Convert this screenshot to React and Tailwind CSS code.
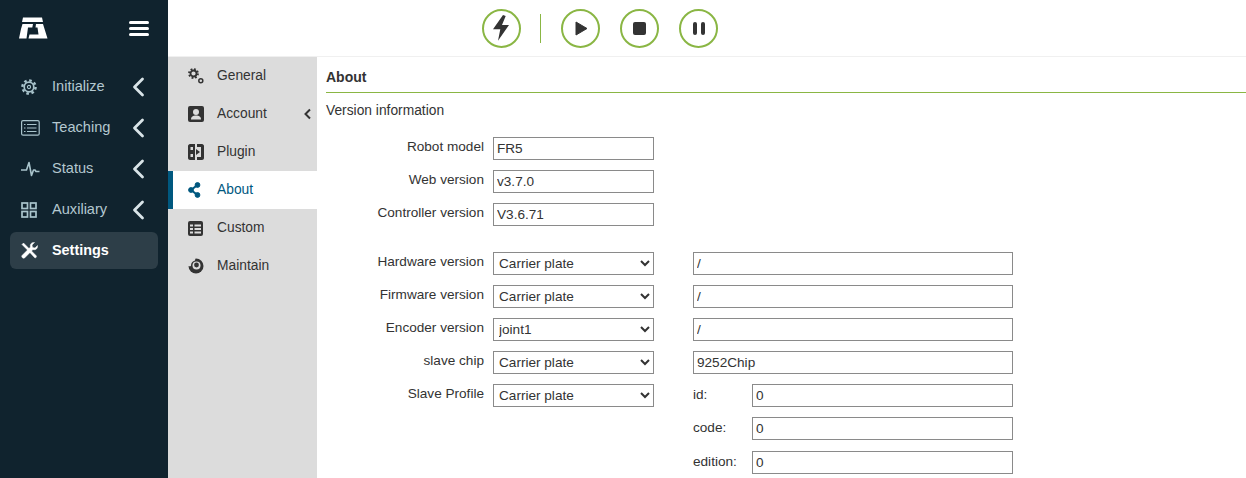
import React from "react"

const font = "font-['Liberation_Sans',Arial,sans-serif]"

function Logo() {
  return (
    <svg width="29" height="22" viewBox="0 0 29 22" fill="#fff">
      <path d="M4 0.5H23L24 5H3Z" />
      <path d="M3.5 7H14L13.3 10.5H9L7.5 21.5H0L2 12Z" />
      <path d="M17 7H24L28.5 21.5H9.5L10.5 17.5H19.5L18.5 10.5H16.5Z" />
    </svg>
  )
}

function SideChevron() {
  return (
    <svg width="13" height="20" viewBox="0 0 13 20" fill="none" stroke="#d9e4e8" strokeWidth="2.8" strokeLinecap="round" strokeLinejoin="round">
      <path d="M10.5 2L2.5 10L10.5 18" />
    </svg>
  )
}

function GearIcon() {
  return (
    <svg width="16" height="16" viewBox="0 0 16 16" fill="none" stroke="#a9c4cc">
      <circle cx="8" cy="8" r="6.6" strokeWidth="2.4" strokeDasharray="2.6 2.58" />
      <circle cx="8" cy="8" r="4.8" strokeWidth="1.7" />
      <circle cx="8" cy="8" r="1.6" strokeWidth="1.1" />
    </svg>
  )
}

function TeachingIcon() {
  return (
    <svg width="19" height="16" viewBox="0 0 19 16" fill="none" stroke="#a9c4cc" strokeWidth="1.2">
      <rect x="0.6" y="0.6" width="17.6" height="14.6" rx="1.5" />
      <path d="M3 4.5H4.5M6 4.5H15.5M3 8H4.5M6 8H15.5M3 11.5H4.5M6 11.5H15.5" />
    </svg>
  )
}

function PulseIcon() {
  return (
    <svg width="19" height="16" viewBox="0 0 19 16" fill="none" stroke="#a9c4cc" strokeWidth="1.6" strokeLinejoin="round">
      <path d="M0 9H5.5L8 1.5L10.5 14.5L12.5 9H14L15 10.5H18.5" />
    </svg>
  )
}

function GridIcon() {
  return (
    <svg width="16" height="16" viewBox="0 0 16 16" fill="none" stroke="#a9c4cc" strokeWidth="1.7">
      <rect x="1" y="1" width="5.5" height="5.5" />
      <rect x="9.5" y="1" width="5.5" height="5.5" />
      <rect x="1" y="9.5" width="5.5" height="5.5" />
      <rect x="9.5" y="9.5" width="5.5" height="5.5" />
    </svg>
  )
}

function WrenchIcon() {
  return (
    <svg width="17" height="17" viewBox="0 0 17 17" fill="#fff" stroke="#fff" strokeWidth="0.5">
      <path d="M1 2.5L2.5 1L9 7.5L15 13.5C16 14.5 15 16.5 13.5 15.5L7.5 9Z" />
      <path d="M16.5 3.5L14 6L11.5 5.5L11 3L13.5 0.5C11 0 8.5 2 9.5 5L1 13.5C0 15 2 17 3.5 16L12 7.5C15 8.5 17 6 16.5 3.5Z" />
    </svg>
  )
}

function SubIcon({ name }) {
  const dark = "#333"
  if (name === "General") {
    return (
      <svg width="16" height="16" viewBox="0 0 16 16" fill="none" stroke={dark}>
        <circle cx="5.5" cy="5.5" r="4.4" strokeWidth="2" strokeDasharray="1.8 1.65" />
        <circle cx="5.5" cy="5.5" r="3" strokeWidth="1.8" />
        <circle cx="12.8" cy="12.8" r="2" strokeWidth="1.5" />
      </svg>
    )
  }
  if (name === "Account") {
    return (
      <svg width="16" height="16" viewBox="0 0 16 16">
        <rect width="16" height="16" rx="2" fill={dark} />
        <circle cx="8" cy="6" r="3" fill="#dcdcdc" />
        <path d="M3 13.5C3 10.5 5 9.5 8 9.5S13 10.5 13 13.5Z" fill="#dcdcdc" />
      </svg>
    )
  }
  if (name === "Plugin") {
    return (
      <svg width="16" height="16" viewBox="0 0 16 16" fill={dark}>
        <path d="M0 2C0 1 1 0 2 0H7V16H2C1 16 0 15 0 14ZM2.5 3V6H5V3ZM2.5 10V13H5V10Z" fillRule="evenodd" />
        <path d="M9 0H14C15 0 16 1 16 2V14C16 15 15 16 14 16H9V13H13V3H9Z" />
        <path d="M8 5L12 8L8 11Z" />
      </svg>
    )
  }
  if (name === "About") {
    return (
      <svg width="13" height="16" viewBox="0 0 13 16" fill="#00587f" stroke="#00587f">
        <circle cx="3" cy="8" r="2.4" />
        <circle cx="9.5" cy="3" r="2.4" />
        <circle cx="9.5" cy="13" r="2.4" />
        <path d="M3 8L9.5 3M3 8L9.5 13" strokeWidth="2.2" />
      </svg>
    )
  }
  if (name === "Custom") {
    return (
      <svg width="15" height="15" viewBox="0 0 15 15">
        <rect width="15" height="15" rx="2" fill={dark} />
        <path d="M2 3.5H5V5.5H2ZM2 7H5V9H2ZM2 10.5H5V12.5H2ZM6.5 3.5H13V5.5H6.5ZM6.5 7H13V9H6.5ZM6.5 10.5H13V12.5H6.5Z" fill="#dcdcdc" />
      </svg>
    )
  }
  return (
    <svg width="16" height="16" viewBox="0 0 16 16">
      <circle cx="8" cy="8" r="7.5" fill={dark} />
      <path d="M0 0H7.5L7 2.5C4.5 3 3 5 3 7.5C3 8 2.5 8.5 0 8Z" fill="#dcdcdc" />
      <circle cx="8.5" cy="7.5" r="4" fill="#dcdcdc" />
      <circle cx="8.5" cy="7" r="2.4" fill={dark} />
    </svg>
  )
}

function RoundButton({ children }) {
  return (
    <button className="w-[39px] h-[39px] rounded-full border-2 border-[#8ab644] bg-white flex items-center justify-center">
      {children}
    </button>
  )
}

function TextBox({ value, width }) {
  return (
    <input
      readOnly
      value={value}
      className={`${width} h-[23px] border border-[#8a8a8a] pl-[3px] pb-[1px] text-[#333] bg-white outline-none`}
    />
  )
}

function SelectBox({ value }) {
  return (
    <select
      value={value}
      onChange={() => {}}
      className="w-[161px] h-[23px] border border-[#8a8a8a] pl-[1px] text-[#333] bg-white outline-none"
    >
      <option>{value}</option>
    </select>
  )
}

function Label({ children }) {
  return <label className="w-[167px] pr-[9px] text-right -mt-[4px]">{children}</label>
}

function Field({ label, value }) {
  return (
    <div className="flex items-center h-[23px]">
      <Label>{label}</Label>
      <TextBox value={value} width="w-[161px]" />
    </div>
  )
}

function ShortField({ label, value }) {
  return (
    <div className="flex items-center h-[23px]">
      <label className="w-[59px] -mt-[2px]">{label}</label>
      <TextBox value={value} width="w-[261px]" />
    </div>
  )
}

const mainItems = [
  { name: "Initialize", icon: <GearIcon /> },
  { name: "Teaching", icon: <TeachingIcon /> },
  { name: "Status", icon: <PulseIcon /> },
  { name: "Auxiliary", icon: <GridIcon /> },
]

const subItems = ["General", "Account", "Plugin", "About", "Custom", "Maintain"]

const selects = [
  ["Hardware version", "Carrier plate", "/"],
  ["Firmware version", "Carrier plate", "/"],
  ["Encoder version", "joint1", "/"],
  ["slave chip", "Carrier plate", "9252Chip"],
]

export default function App() {
  return (
    <div className={`${font} flex w-[1246px] h-[478px] overflow-hidden bg-white text-sm text-[#333]`}>
      <aside className="w-[168px] shrink-0 bg-[#10232e] pt-[17px]">
        <div className="flex items-center justify-between pl-[19px] pr-[19px] h-[22px]">
          <Logo />
          <div className="flex flex-col gap-[3px] w-5">
            <span className="h-[3px] rounded-sm bg-white" />
            <span className="h-[3px] rounded-sm bg-white" />
            <span className="h-[3px] rounded-sm bg-white" />
          </div>
        </div>
        <nav className="mt-[27px]">
          {mainItems.map((item) => (
            <div key={item.name} className="flex items-center h-[41px] pl-[21px] pr-[23px] text-[14.6px] text-[#b4c8d0]">
              <span className="w-[31px] shrink-0">{item.icon}</span>
              <span className="flex-1">{item.name}</span>
              <SideChevron />
            </div>
          ))}
          <div className="flex items-center h-[37px] mx-[10px] mt-[2px] pl-[11px] rounded-md bg-[#2d3e48] text-[14.4px] text-white font-bold">
            <span className="w-[31px]"><WrenchIcon /></span>
            <span>Settings</span>
          </div>
        </nav>
      </aside>

      <div className="flex-1 flex flex-col min-w-0">
        <header className="h-[57px] shrink-0 border-b border-[#f0f0f0] flex items-center pl-[314px]">
          <RoundButton>
            <svg width="17" height="26" viewBox="0 0 17 26" fill="#333">
              <path d="M10 0L0 14.3H7.3L5 25.7L16 10H9L12.7 1Z" />
            </svg>
          </RoundButton>
          <span className="w-px h-[29px] bg-[#8ab644] ml-[19px] mr-[20px]" />
          <div className="flex gap-[20px]">
            <RoundButton>
              <svg width="13" height="15" viewBox="0 0 13 15" fill="#333" stroke="#333" strokeLinejoin="round" className="ml-[2px]">
                <path d="M1 1L12 7.5L1 14Z" />
              </svg>
            </RoundButton>
            <RoundButton>
              <span className="w-[13px] h-[13px] rounded-[2px] bg-[#333]" />
            </RoundButton>
            <RoundButton>
              <span className="flex gap-[4px]">
                <span className="w-1 h-[13px] rounded-sm bg-[#333]" />
                <span className="w-1 h-[13px] rounded-sm bg-[#333]" />
              </span>
            </RoundButton>
          </div>
        </header>

        <div className="flex-1 flex min-h-0">
          <div className="w-[149px] shrink-0 bg-[#dcdcdc] text-[13.8px]">
            {subItems.map((name) =>
              name === "About" ? (
                <div key={name} className="flex items-center h-[38px] bg-white border-l-[5px] border-[#00587f] pl-[15px] text-[#00587f]">
                  <span className="w-[29px]"><SubIcon name={name} /></span>
                  <span className="-mt-[1px]">{name}</span>
                </div>
              ) : (
                <div key={name} className="flex items-center h-[38px] pl-5">
                  <span className="w-[29px]"><SubIcon name={name} /></span>
                  <span className="flex-1 -mt-[1px]">{name}</span>
                  {name === "Account" && (
                    <svg width="9" height="12" viewBox="0 0 9 12" fill="none" stroke="#333" strokeWidth="2" className="mr-[5px]">
                      <path d="M7 1.5L2.5 6L7 10.5" />
                    </svg>
                  )}
                </div>
              )
            )}
          </div>

          <main className="flex-1 pl-[9px] min-w-0 text-[13.6px]">
            <h2 className="font-bold text-sm h-[35px] pt-[11px] leading-[18px]">About</h2>
            <div className="h-px bg-[#8ab644]" />
            <p className="mt-[9px] text-[13.8px] leading-[18px]">Version information</p>
            <div className="mt-[17px] flex flex-col gap-[10px]">
              <Field label="Robot model" value="FR5" />
              <Field label="Web version" value="v3.7.0" />
              <Field label="Controller version" value="V3.6.71" />
            </div>
            <div className="mt-[26px] flex gap-[39px]">
              <div className="flex flex-col gap-[10px]">
                {selects.map(([label, value]) => (
                  <div key={label} className="flex items-center h-[23px]">
                    <Label>{label}</Label>
                    <SelectBox value={value} />
                  </div>
                ))}
                <div className="flex items-center h-[23px]">
                  <Label>Slave Profile</Label>
                  <SelectBox value="Carrier plate" />
                </div>
              </div>
              <div className="flex flex-col gap-[10px]">
                {selects.map(([label, , text]) => (
                  <TextBox key={label} value={text} width="w-[320px]" />
                ))}
                <ShortField label="id:" value="0" />
                <ShortField label="code:" value="0" />
                <div className="mt-[1px]">
                  <ShortField label="edition:" value="0" />
                </div>
              </div>
            </div>
          </main>
        </div>
      </div>
    </div>
  )
}
